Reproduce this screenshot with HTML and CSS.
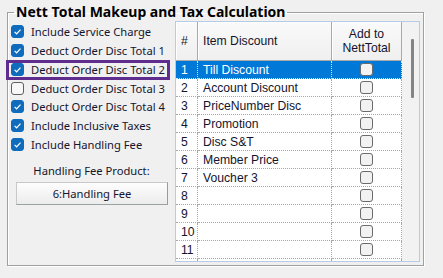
FILE: index.html
```html
<!DOCTYPE html>
<html lang="en">
<head>
    <meta charset="UTF-8">
    <title>Nett Total Makeup</title>
    <link rel="stylesheet" href="styles.css">
</head>
<body>

    <fieldset class="group">
        <legend>Nett Total Makeup and Tax Calculation</legend>
        <div class="group-body">

            <!-- Options on the left -->
            <div class="options">
                <label class="opt"><span class="box on"><svg viewBox="0 0 13 13"><polyline points="3.6,6.9 5.6,8.8 9.5,4.6"/></svg></span>Include Service Charge</label>
                <label class="opt"><span class="box on"><svg viewBox="0 0 13 13"><polyline points="3.6,6.9 5.6,8.8 9.5,4.6"/></svg></span>Deduct Order Disc Total 1</label>
                <label class="opt"><span class="box on"><svg viewBox="0 0 13 13"><polyline points="3.6,6.9 5.6,8.8 9.5,4.6"/></svg></span>Deduct Order Disc Total 2</label>
                <label class="opt"><span class="box"></span>Deduct Order Disc Total 3</label>
                <label class="opt"><span class="box on"><svg viewBox="0 0 13 13"><polyline points="3.6,6.9 5.6,8.8 9.5,4.6"/></svg></span>Deduct Order Disc Total 4</label>
                <label class="opt"><span class="box on"><svg viewBox="0 0 13 13"><polyline points="3.6,6.9 5.6,8.8 9.5,4.6"/></svg></span>Include Inclusive Taxes</label>
                <label class="opt"><span class="box on"><svg viewBox="0 0 13 13"><polyline points="3.6,6.9 5.6,8.8 9.5,4.6"/></svg></span>Include Handling Fee</label>

                <div class="product-label">Handling Fee Product:</div>
                <button class="product-btn">6:Handling Fee</button>
            </div>

            <!-- Discount grid -->
            <div class="grid">
                <div class="table">
                    <div class="row head">
                        <div class="cell">#</div>
                        <div class="cell">Item Discount</div>
                        <div class="cell center">Add to<br>NettTotal</div>
                    </div>
                    <div class="row sel">
                        <div class="cell">1</div><div class="cell">Till Discount</div><div class="cell center"><span class="tick"></span></div>
                    </div>
                    <div class="row">
                        <div class="cell">2</div><div class="cell">Account Discount</div><div class="cell center"><span class="tick"></span></div>
                    </div>
                    <div class="row">
                        <div class="cell">3</div><div class="cell">PriceNumber Disc</div><div class="cell center"><span class="tick"></span></div>
                    </div>
                    <div class="row">
                        <div class="cell">4</div><div class="cell">Promotion</div><div class="cell center"><span class="tick"></span></div>
                    </div>
                    <div class="row">
                        <div class="cell">5</div><div class="cell">Disc S&amp;T</div><div class="cell center"><span class="tick"></span></div>
                    </div>
                    <div class="row">
                        <div class="cell">6</div><div class="cell">Member Price</div><div class="cell center"><span class="tick"></span></div>
                    </div>
                    <div class="row">
                        <div class="cell">7</div><div class="cell">Voucher 3</div><div class="cell center"><span class="tick"></span></div>
                    </div>
                    <div class="row">
                        <div class="cell">8</div><div class="cell"></div><div class="cell center"><span class="tick"></span></div>
                    </div>
                    <div class="row">
                        <div class="cell">9</div><div class="cell"></div><div class="cell center"><span class="tick"></span></div>
                    </div>
                    <div class="row">
                        <div class="cell">10</div><div class="cell"></div><div class="cell center"><span class="tick"></span></div>
                    </div>
                    <div class="row">
                        <div class="cell">11</div><div class="cell"></div><div class="cell center"><span class="tick"></span></div>
                    </div>
                    <div class="row">
                        <div class="cell"></div><div class="cell"></div><div class="cell center"></div>
                    </div>
                </div>
                <div class="scrollbar"><div class="thumb"></div></div>
            </div>

        </div>
    </fieldset>

    <!-- highlight marker -->
    <div class="marker"></div>

</body>
</html>
```

FILE: styles.css
```css
body {
    margin: 0;
    background: #f0f0f0;
    font-family: 'Noto Sans', sans-serif;
    font-size: 11.2px;
    color: #14142e;
    width: 443px;
    height: 278px;
    overflow: hidden;
    position: relative;
}

.group {
    margin: 4px 0 0 7px;
    padding: 0 3px 3px 0;
    width: 417px;
    box-sizing: border-box;
    border: 1px solid #a0a0a0;
    box-shadow: 1px 1px 0 #fff, inset 1px 1px 0 #fff;
    min-width: 0;
}
.group legend {
    margin-left: 6px;
    padding: 0 2px;
    font-weight: bold;
    font-size: 14px;
    line-height: 16px;
    color: #000;
}

.group-body {
    display: flex;
}

/* Left options */
.options {
    width: 167px;
    padding-top: 2.5px;
    display: flex;
    flex-direction: column;
}
.opt {
    height: 18.75px;
    display: flex;
    align-items: center;
    white-space: nowrap;
}
.box {
    width: 13px;
    height: 13px;
    box-sizing: border-box;
    border: 1px solid #5f5f5f;
    border-radius: 3px;
    background: #f7f7f7;
    margin: 0 7px 0 3px;
    flex: none;
    display: block;
}
.box.on {
    background: #0f6cbd;
    border-color: #0f6cbd;
}
.box svg {
    display: block;
    width: 13px;
    height: 13px;
    margin: -1px;
}
.box svg polyline {
    fill: none;
    stroke: #fff;
    stroke-width: 1.2;
}

.product-label {
    margin-top: 9px;
    line-height: 16px;
    text-align: center;
}
.product-btn {
    margin: 3px 0 0 8px;
    width: 152px;
    height: 23px;
    font-family: 'Noto Sans', sans-serif;
    font-size: 11.2px;
    color: #14142e;
    background: linear-gradient(#fdfdfd, #ececec);
    border: 1px solid #c8c8c8;
    border-right-color: #9a9a9a;
    border-bottom-color: #9aa2a2;
    padding: 0;
}

/* Grid */
.grid {
    margin-top: 1px;
    width: 245px;
    height: 241px;
    box-sizing: border-box;
    border: 1px solid #b4cce6;
    display: flex;
    overflow: hidden;
    font-family: 'Liberation Sans', Arial, sans-serif;
    font-size: 12.2px;
}
.table {
    width: 226px;
    background: #fff;
}
.row {
    display: grid;
    grid-template-columns: 22px 134px 70px;
    height: 18px;
}
.cell {
    box-sizing: border-box;
    border-right: 1px dotted #a8a8a8;
    border-bottom: 1px dotted #a8a8a8;
    padding-left: 5px;
    display: flex;
    align-items: center;
    white-space: nowrap;
}
.cell.center {
    justify-content: center;
    text-align: center;
    padding-left: 0;
}
.row.head {
    height: 39px;
    background: #f0f0f0;
}
.row.head .cell {
    border-right: 1px solid #a9a9a9;
    border-bottom: 1px solid #a9a9a9;
    box-shadow: inset 1px 1px 0 #fff;
    background: linear-gradient(#fafafa, #efefef);
    line-height: 14px;
}
.row.sel {
    background: #0078d7;
    color: #fff;
}
.row.sel .cell {
    border-color: #cfe3f7;
}
.tick {
    width: 13px;
    height: 13px;
    box-sizing: border-box;
    border: 1.5px solid #6a6a6a;
    border-radius: 3px;
    background: #f2f2f2;
    margin-left: -1px;
}

.scrollbar {
    flex: 1;
    background: #f2f2f2;
    padding-top: 17px;
}
.thumb {
    width: 3px;
    height: 59px;
    margin-left: 9px;
    background: #858585;
    border-radius: 1px;
}

/* overlay marker around the selected option */
.marker {
    position: absolute;
    left: 6px;
    top: 60px;
    width: 164px;
    height: 20px;
    box-sizing: border-box;
    border: 3px solid #5e2d8e;
}
```
